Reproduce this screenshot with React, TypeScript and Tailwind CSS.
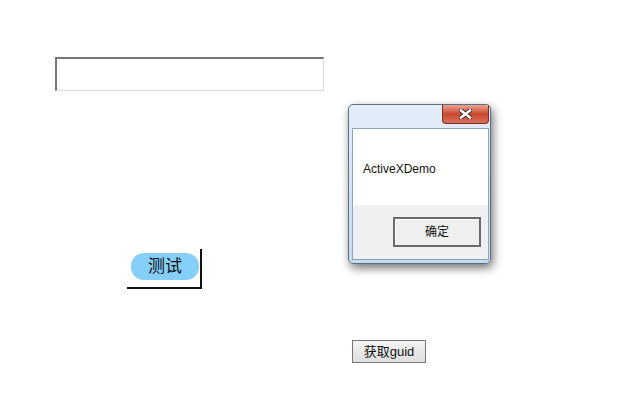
import React from 'react'

const cjk = { fontFamily: '"Liberation Sans", "Noto Sans CJK SC", sans-serif' }

export default function App() {
  return (
    <div className="relative w-[628px] h-[399px] bg-white" style={cjk}>
      <div className="pt-[57px] pl-[55px]">
        {/* 文本框 */}
        <input
          className="block w-[269px] h-[34px] bg-white border-t-2 border-l-2 border-b border-r border-t-[#767676] border-l-[#767676] border-b-[#dcdcdc] border-r-[#dcdcdc] outline-none"
          readOnly
        />

        {/* 测试 按钮 */}
        <div className="mt-[158px] ml-[72px] w-[75px] h-[40px] border-r-2 border-b-2 border-r-[#111] border-b-[#111] bg-white pt-[4px] pl-[4px]">
          <button className="w-[68px] h-[27px] rounded-[13px] bg-[#86cffb] text-[17px] leading-[27px] text-[#111]">
            测试
          </button>
        </div>

        {/* 获取guid */}
        <button className="mt-[51px] ml-[297px] w-[74px] h-[23px] border border-[#767676] bg-gradient-to-b from-[#f4f4f4] to-[#dedede] text-[13px] leading-[21px] text-[#111]">
          获取guid
        </button>
      </div>

      {/* 消息框 */}
      <div className="absolute left-[348px] top-[104px] w-[143px] h-[160px] rounded-[5px] border border-[#5e6e82] bg-gradient-to-b from-[#e4eefa] to-[#c6daf0] shadow-[2px_4px_10px_rgba(0,0,0,0.55)] flex flex-col">
        <div className="relative h-[23px] shrink-0">
          <div className="absolute right-[1px] top-0 w-[47px] h-[19px] rounded-b-[4px] border border-t-0 border-[#7e3022] bg-gradient-to-b from-[#e9a393] via-[#c8472f] to-[#d9705a] flex items-center justify-center">
            <svg width="13" height="10" viewBox="0 0 13 10">
              <path d="M2 1.5 L11 8.5 M11 1.5 L2 8.5" stroke="#3a2420" strokeWidth="4.4" strokeLinecap="square" />
              <path d="M2 1.5 L11 8.5 M11 1.5 L2 8.5" stroke="#ffffff" strokeWidth="2.6" strokeLinecap="square" />
            </svg>
          </div>
        </div>
        <div className="ml-[3px] mr-[1px] mb-[3px] flex-1 border border-[#8ea4be] flex flex-col">
          <div className="h-[76px] bg-white pl-[10px] pt-[33px] text-[12px] leading-[14px] text-[#111]">
            ActiveXDemo
          </div>
          <div className="flex-1 bg-[#f0f0f0] pt-[12px] pl-[40px]">
            <button className="w-[88px] h-[30px] border-2 border-[#6b6b6b] bg-[#efefef] shadow-[inset_1px_1px_0_#ffffff] text-[12px] leading-[26px] text-[#111]">
              确定
            </button>
          </div>
        </div>
      </div>
    </div>
  )
}
